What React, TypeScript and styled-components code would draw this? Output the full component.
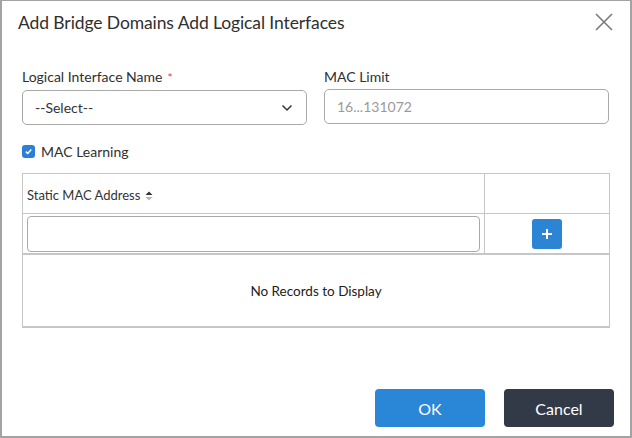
import React from "react";
import styled, { createGlobalStyle } from "styled-components";

const GlobalStyle = createGlobalStyle`
  html, body {
    margin: 0;
    padding: 0;
    background: #ffffff;
  }
  body {
    font-family: Lato, "Open Sans", sans-serif;
    color: #333;
  }
  * {
    box-sizing: border-box;
  }
`;

const Dialog = styled.div`
  width: 632px;
  height: 438px;
  border: 2px solid #a3a3a3;
  border-top-width: 1px;
  background: #fff;
  display: flex;
  flex-direction: column;
`;

const Header = styled.div`
  display: flex;
  align-items: center;
  justify-content: space-between;
  height: 42px;
  padding: 0 16px 0 16px;
`;

const Title = styled.h1`
  margin: 0;
  font-size: 17.5px;
  font-weight: 400;
  color: #2f2f2f;
  letter-spacing: -0.1px;
`;

const CloseButton = styled.button`
  border: 0;
  background: none;
  padding: 0;
  width: 20px;
  height: 20px;
  display: flex;
  align-items: center;
  justify-content: center;
  cursor: pointer;
`;

const Body = styled.div`
  flex: 1;
  padding: 25px 21px 0 20px;
  display: flex;
  flex-direction: column;
`;

const FieldRow = styled.div`
  display: grid;
  grid-template-columns: 285px 285px;
  column-gap: 17px;
`;

const Field = styled.div`
  display: flex;
  flex-direction: column;
  gap: 4px;
`;

const Label = styled.label`
  font-size: 14px;
  color: #2f2f2f;
  line-height: 17px;
`;

const Required = styled.span`
  color: #e0393e;
  margin-left: 5px;
  font-size: 12px;
`;

const Box = styled.div<{ $placeholder?: boolean }>`
  height: 35px;
  border: 1px solid #a9a9a9;
  border-radius: 5px;
  display: flex;
  align-items: center;
  justify-content: space-between;
  padding: 0 13px 0 12px;
  font-size: 14px;
  color: ${(p) => (p.$placeholder ? "#9a9a9a" : "#333")};
`;

const CheckRow = styled.div`
  display: flex;
  align-items: center;
  gap: 6px;
  margin-top: 18px;
  font-size: 14px;
  color: #2f2f2f;
`;

const Checkbox = styled.span`
  width: 13px;
  height: 13px;
  border-radius: 3px;
  background: #2d7fd6;
  display: flex;
  align-items: center;
  justify-content: center;
`;

const Table = styled.div`
  margin-top: 13px;
  width: 588px;
  border: 1px solid #c6c6c6;
  border-bottom-width: 2px;
  display: grid;
  grid-template-columns: 462px 1fr;
`;

const HeadCell = styled.div<{ $last?: boolean }>`
  height: 40px;
  display: flex;
  align-items: center;
  padding: 2px 4px 0;
  font-size: 13px;
  color: #333;
  border-right: ${(p) => (p.$last ? "none" : "1px solid #c6c6c6")};
  border-bottom: 1px solid #c6c6c6;
`;

const SortIcon = styled.svg`
  margin-left: 5px;
  margin-top: 3px;
`;

const Cell = styled.div<{ $last?: boolean }>`
  height: 41px;
  display: flex;
  align-items: center;
  justify-content: center;
  padding: 0 4px;
  border-right: ${(p) => (p.$last ? "none" : "1px solid #c6c6c6")};
  border-bottom: 2px solid #c6c6c6;
`;

const TextInput = styled.div`
  width: 100%;
  height: 36px;
  border: 1px solid #a9a9a9;
  border-radius: 4px;
`;

const AddButton = styled.button`
  width: 30px;
  height: 30px;
  border: 0;
  border-radius: 3px;
  background: #2c84d4;
  display: flex;
  align-items: center;
  justify-content: center;
  padding: 0;
`;

const Empty = styled.div`
  grid-column: 1 / span 2;
  height: 71px;
  display: flex;
  align-items: center;
  justify-content: center;
  font-size: 13.5px;
  color: #222;
`;

const Footer = styled.div`
  display: flex;
  justify-content: flex-end;
  gap: 19px;
  padding: 0 16px 9px 0;
`;

const Button = styled.button<{ $variant: "primary" | "dark" }>`
  width: 110px;
  height: 38px;
  border: 0;
  border-radius: 4px;
  font-family: Lato, sans-serif;
  font-size: 16px;
  color: #fff;
  background: ${(p) => (p.$variant === "primary" ? "#2a86d6" : "#323a48")};
`;

const App: React.FC = () => {
  return (
    <>
      <GlobalStyle />
      <Dialog>
        <Header>
          <Title>Add Bridge Domains Add Logical Interfaces</Title>
          <CloseButton aria-label="Close">
            <svg width="18" height="18" viewBox="0 0 18 18">
              <path
                d="M1 1 L17 17 M17 1 L1 17"
                stroke="#7a7a7a"
                strokeWidth="1.6"
                fill="none"
              />
            </svg>
          </CloseButton>
        </Header>
        <Body>
          <FieldRow>
            <Field>
              <Label>
                Logical Interface Name<Required>*</Required>
              </Label>
              <Box>
                --Select--
                <svg width="12" height="8" viewBox="0 0 12 8">
                  <path
                    d="M1.5 1.5 L6 6 L10.5 1.5"
                    stroke="#333"
                    strokeWidth="1.5"
                    fill="none"
                  />
                </svg>
              </Box>
            </Field>
            <Field>
              <Label>MAC Limit</Label>
              <Box $placeholder>16...131072</Box>
            </Field>
          </FieldRow>
          <CheckRow>
            <Checkbox>
              <svg width="9" height="9" viewBox="0 0 9 9">
                <path
                  d="M1.8 4.6 L3.7 6.4 L7.3 2.6"
                  stroke="#fff"
                  strokeWidth="1.5"
                  fill="none"
                />
              </svg>
            </Checkbox>
            MAC Learning
          </CheckRow>
          <Table>
            <HeadCell>
              Static MAC Address
              <SortIcon width="8" height="10" viewBox="0 0 8 10">
                <path d="M0.5 4 L4 0.5 L7.5 4 Z" fill="#333" />
                <path d="M0.5 6 L4 9.5 L7.5 6 Z" fill="#b5b5b5" />
              </SortIcon>
            </HeadCell>
            <HeadCell $last />
            <Cell>
              <TextInput />
            </Cell>
            <Cell $last>
              <AddButton aria-label="Add">
                <svg width="12" height="12" viewBox="0 0 12 12">
                  <path d="M6 1 V11 M1 6 H11" stroke="#fff" strokeWidth="2" />
                </svg>
              </AddButton>
            </Cell>
            <Empty>No Records to Display</Empty>
          </Table>
        </Body>
        <Footer>
          <Button $variant="primary">OK</Button>
          <Button $variant="dark">Cancel</Button>
        </Footer>
      </Dialog>
    </>
  );
};

export default App;
